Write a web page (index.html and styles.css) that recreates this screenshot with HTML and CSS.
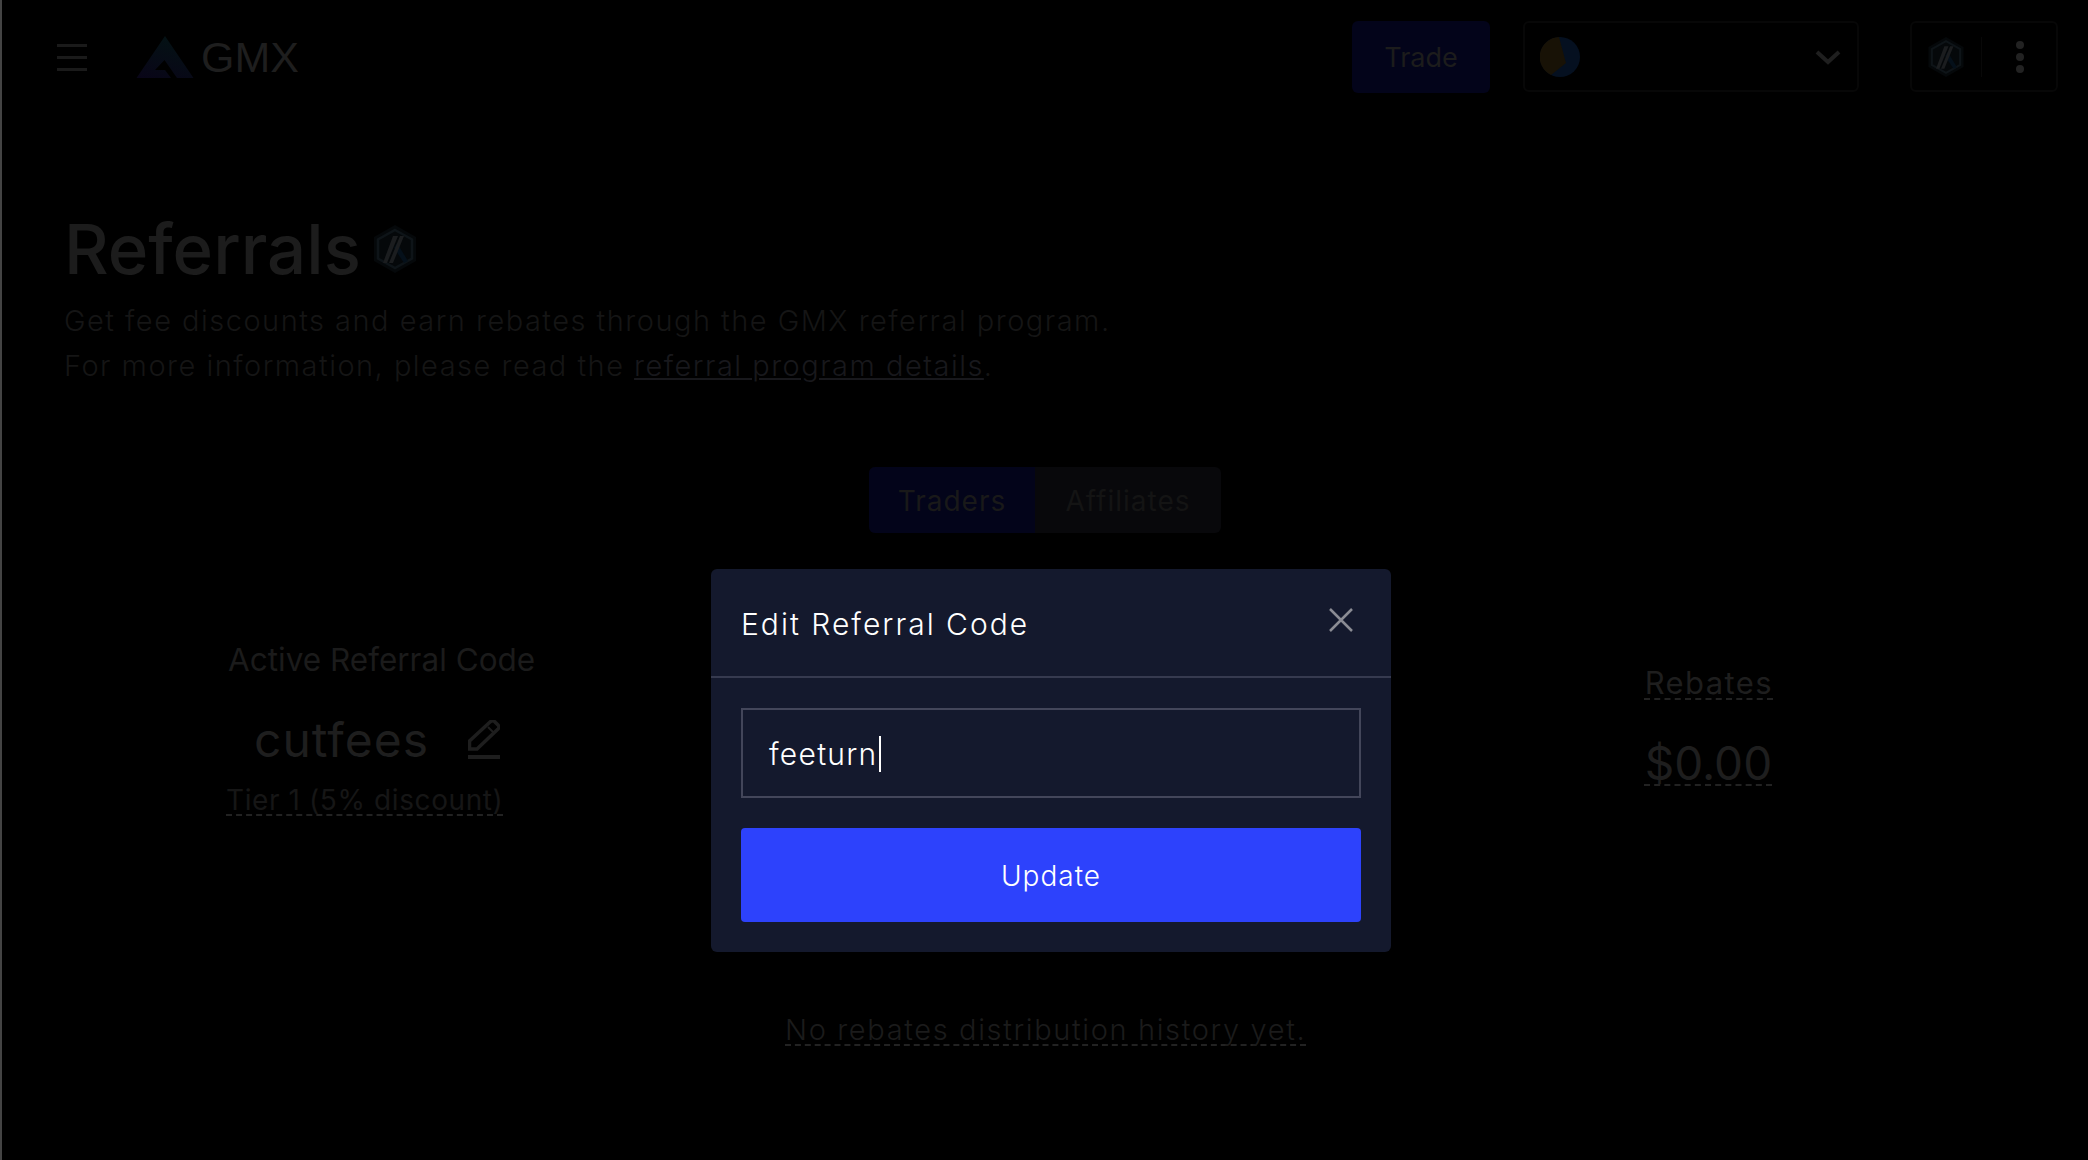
FILE: index.html
```html
<!DOCTYPE html>
<html lang="en">
<head>
    <meta charset="UTF-8">
    <meta name="viewport" content="width=device-width, initial-scale=1.0">
    <title>Referrals | GMX</title>
    <link rel="stylesheet" href="styles.css">
</head>
<body>
    <header class="top-bar">
        <div class="top-left">
            <div class="hamburger"><span></span><span></span><span></span></div>
            <div class="logo">
                <svg width="58" height="42" viewBox="0 0 58 42">
                    <defs>
                        <linearGradient id="logoGrad" x1="0" y1="1" x2="0.4" y2="0">
                            <stop offset="0" stop-color="#090518"/>
                            <stop offset="1" stop-color="#041114"/>
                        </linearGradient>
                    </defs>
                    <path fill="url(#logoGrad)" d="M29 0L57.5 42H41L28.5 24L19 34H29L35 42H0.5Z"/>
                </svg>
                <span class="logo-text">GMX</span>
            </div>
        </div>
        <div class="top-right">
            <button class="trade-btn">Trade</button>
            <div class="wallet">
                <svg width="40" height="40" viewBox="0 0 40 40">
                    <circle cx="20" cy="20" r="20" fill="#051020"/>
                    <path fill="#181206" d="M19 0A20 20 0 0 0 11 38L26 26Z"/>
                </svg>
                <svg class="chevron" width="26" height="16" viewBox="0 0 26 16">
                    <path d="M2 3L13 13L24 3" fill="none" stroke="#1f1f1f" stroke-width="4"/>
                </svg>
            </div>
            <div class="settings">
                <svg class="arb-small" width="40" height="40" viewBox="0 0 48 48">
                    <use href="#arbIcon"/>
                </svg>
                <div class="settings-divider"></div>
                <div class="dots"><span></span><span></span><span></span></div>
            </div>
        </div>
    </header>

    <main class="page">
        <section class="page-title">
            <h1>Referrals
                <svg class="arb-large" width="48" height="48" viewBox="0 0 48 48">
                    <g id="arbIcon">
                        <path fill="#05080a" d="M24 0L45 12V36L24 48L3 36V12Z"/>
                        <path fill="none" stroke="#0e1418" stroke-width="2.5" d="M24 5L41 14.5V33.5L24 43L7 33.5V14.5Z"/>
                        <path fill="#05101a" d="M26 18L37 36L33 38L23 23Z"/>
                        <path fill="#1b1d1f" d="M22 11H27L16 38H12ZM29 11H33L22 38H18Z"/>
                    </g>
                </svg>
            </h1>
            <p>Get fee discounts and earn rebates through the GMX referral program.<br>
            For more information, please read the <a href="#">referral program details</a>.</p>
        </section>

        <div class="tabs">
            <div class="tab active">Traders</div>
            <div class="tab">Affiliates</div>
        </div>

        <section class="stats">
            <div class="stat stat-code">
                <div class="stat-label">Active Referral Code</div>
                <div class="code-row">
                    <span class="code">cutfees</span>
                    <svg class="edit-icon" width="32" height="39" viewBox="0 0 32 39">
                        <path fill="none" stroke="#1e1e1e" stroke-width="3.5" d="M1.5 21L22 2Q25 -0.5 27 2L30 5Q32 7 30 9L9 29H1.5Z"/>
                        <path fill="none" stroke="#1e1e1e" stroke-width="2" d="M20 7L26 13"/>
                        <path stroke="#1e1e1e" stroke-width="4" d="M0 37H32"/>
                    </svg>
                </div>
                <div class="tier"><span class="dashed">Tier 1 (5% discount)</span></div>
            </div>
            <div class="stat stat-rebates">
                <div class="rebates-label"><span class="dashed">Rebates</span></div>
                <div class="rebates-value"><span class="dashed">$0.00</span></div>
            </div>
        </section>

        <div class="history"><span class="dashed">No rebates distribution history yet.</span></div>
    </main>

    <div class="modal">
        <div class="modal-header">
            <span>Edit Referral Code</span>
            <svg class="modal-close" width="24" height="24" viewBox="0 0 24 24">
                <path d="M1 1L23 23M23 1L1 23" stroke="#8b8c94" stroke-width="2.5" fill="none"/>
            </svg>
        </div>
        <div class="modal-body">
            <div class="code-input"><span>feeturn</span><i class="caret"></i></div>
            <button class="update-btn">Update</button>
        </div>
    </div>
</body>
</html>
```

FILE: styles.css
```css
* {
    box-sizing: border-box;
}

body {
    margin: 0;
    height: 1160px;
    overflow: hidden;
    background-color: #000;
    border-left: 2px solid #444;
    font-family: Inter, "Noto Sans", sans-serif;
    color: #1a1a1a;
    position: relative;
}

.top-bar {
    display: flex;
    justify-content: space-between;
    align-items: flex-start;
    height: 114px;
    padding: 21px 30px 0 55px;
}

.top-left {
    display: flex;
    align-items: center;
    height: 72px;
}

.hamburger {
    display: flex;
    flex-direction: column;
    gap: 9px;
    width: 30px;
    margin-right: 49px;
}

.hamburger span {
    height: 3px;
    background-color: #1a1a1a;
}

.logo {
    display: flex;
    align-items: center;
    gap: 7px;
}

.logo-text {
    font-family: "Liberation Sans", Arial, sans-serif;
    font-size: 43px;
    color: #1e1e1e;
    line-height: 42px;
}

.top-right {
    display: flex;
    align-items: flex-start;
}

.trade-btn {
    width: 138px;
    height: 72px;
    margin-right: 33px;
    padding-top: 2px;
    border: none;
    border-radius: 6px;
    background-color: #03041a;
    color: #1c1c1c;
    font-family: inherit;
    font-size: 27px;
}

.wallet {
    display: flex;
    justify-content: space-between;
    align-items: center;
    width: 336px;
    height: 71px;
    margin-right: 51px;
    padding: 0 16px 0 15px;
    border: 2px solid #070707;
    border-radius: 6px;
}

.settings {
    display: flex;
    align-items: center;
    width: 148px;
    height: 71px;
    border: 2px solid #070707;
    border-radius: 6px;
}

.arb-small {
    margin: 0 15px 0 14px;
}

.settings-divider {
    width: 1px;
    height: 40px;
    background-color: #080808;
}

.dots {
    display: flex;
    flex-direction: column;
    gap: 4px;
    margin-left: 34px;
}

.dots span {
    width: 8px;
    height: 8px;
    border-radius: 50%;
    background-color: #222;
}

.page-title {
    padding: 0 62px;
    margin-top: 103px;
}

.page-title h1 {
    display: flex;
    align-items: center;
    gap: 10px;
    margin: 0;
    height: 64px;
    font-size: 69px;
    font-weight: 500;
    line-height: 64px;
    color: #1c1c1c;
}

.page-title p {
    margin: 17px 0 0;
    font-size: 29px;
    font-weight: 300;
    line-height: 45px;
    letter-spacing: 1.48px;
    color: #151515;
}

.page-title a {
    color: #18181c;
}

.tabs {
    display: flex;
    width: 352px;
    height: 66px;
    margin: 79px 0 0 867px;
    border-radius: 6px;
    overflow: hidden;
    background-color: #08080b;
    font-size: 28px;
    letter-spacing: 1px;
    color: #141414;
}

.tab {
    display: flex;
    justify-content: center;
    align-items: center;
    flex: 0 0 186px;
    padding-top: 2px;
}

.tab.active {
    flex: 0 0 166px;
    background-color: #03041a;
    color: #191919;
}

.stats {
    display: flex;
    justify-content: space-between;
    padding: 0 315px 0 224px;
    margin-top: 107px;
}

.stat-label {
    font-size: 31.5px;
    color: #1b1b1b;
    line-height: 40px;
    padding-left: 2px;
}

.code-row {
    display: flex;
    align-items: flex-end;
    gap: 39px;
    margin-top: 33px;
    padding-left: 28px;
}

.edit-icon {
    margin-bottom: 8px;
}

.code {
    font-size: 48px;
    letter-spacing: 1px;
    line-height: 54px;
    color: #1e1e1e;
}

.tier {
    margin-top: 16px;
    font-size: 28px;
    letter-spacing: 0.6px;
    color: #161616;
}

.dashed {
    text-decoration: underline dashed #222 2px;
    text-decoration-skip-ink: none;
    text-underline-offset: 4px;
}

.stat-rebates {
    padding-top: 23px;
}

.rebates-label {
    font-size: 31px;
    letter-spacing: 1.4px;
    line-height: 40px;
    color: #1e1e1e;
}

.rebates-value {
    margin-top: 32px;
    font-size: 46px;
    line-height: 56px;
    color: #1e1e1e;
}

.history {
    margin-top: 195px;
    padding-left: 783px;
    font-size: 29px;
    font-weight: 300;
    letter-spacing: 1.63px;
    color: #1b1b1b;
}

/* sits over the dimmed page */
.modal {
    position: absolute;
    left: 709px;
    top: 569px;
    width: 680px;
    height: 383px;
    border-radius: 6px;
    background-color: #14192d;
    color: #fff;
}

.modal-header {
    display: flex;
    justify-content: space-between;
    align-items: center;
    height: 109px;
    padding: 2px 38px 0 30px;
    border-bottom: 2px solid #363a4f;
    font-size: 30px;
    font-weight: 300;
    letter-spacing: 2px;
}

.modal-close {
    margin-top: -8px;
}

.modal-body {
    display: flex;
    flex-direction: column;
    gap: 30px;
    padding: 30px;
}

.code-input {
    display: flex;
    align-items: center;
    height: 90px;
    padding: 2px 0 0 26px;
    border: 2px solid #43465a;
    font-size: 30px;
    font-weight: 300;
    letter-spacing: 1.25px;
}

.caret {
    width: 2px;
    height: 36px;
    margin-left: 1px;
    background-color: #fff;
}

.update-btn {
    height: 94px;
    padding-top: 2px;
    border: none;
    border-radius: 4px;
    background-color: #2d42fc;
    color: #fff;
    font-family: inherit;
    font-size: 28px;
    font-weight: 300;
    letter-spacing: 1px;
}
```
